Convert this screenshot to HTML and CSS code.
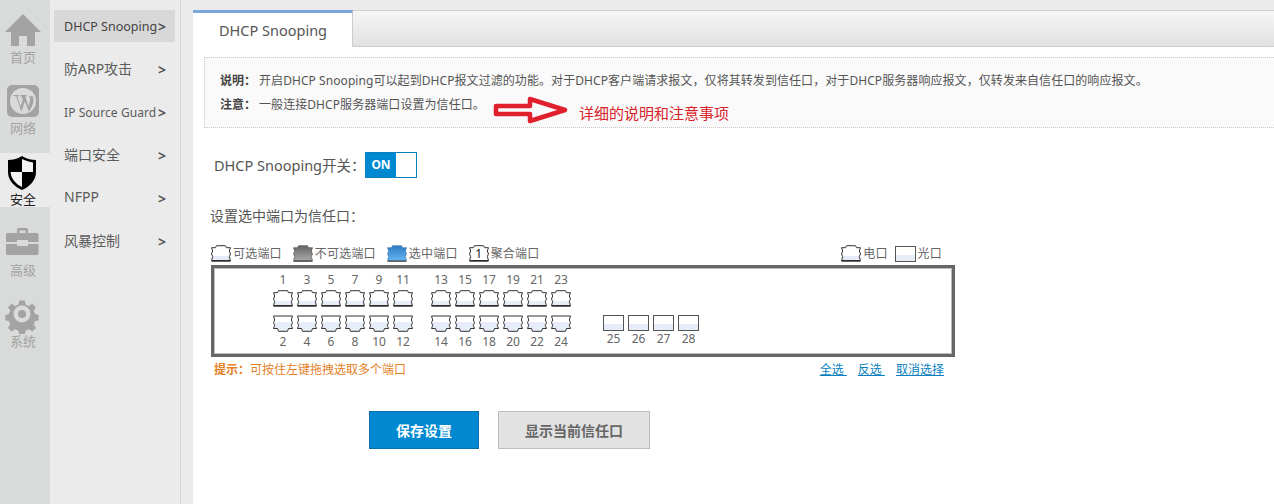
FILE: index.html
```html
<!DOCTYPE html>
<html lang="zh-CN">
<head>
<meta charset="utf-8">
<title>DHCP Snooping</title>
<link rel="stylesheet" href="styles.css">
</head>
<body>
<svg class="defs" width="0" height="0">
  <defs>
    <linearGradient id="gb" x1="0" y1="0" x2="0" y2="1"><stop offset="0" stop-color="#2c7cc4"/><stop offset="1" stop-color="#66b4f0"/></linearGradient>
    <linearGradient id="gg" x1="0" y1="0" x2="0" y2="1"><stop offset="0" stop-color="#666"/><stop offset="1" stop-color="#a8a8a8"/></linearGradient>
  </defs>
  <symbol id="rj" viewBox="0 0 20 17">
    <path class="rj-fill" d="M1.500 11h17l.7 4.500H.8z"/>
    <path class="rj-line" d="M5.500.7h9l1 2h4l-1.200 3.300 1.200 3-1.200 2.500 1.200 4H.5l1.200-4L.5 9l1.200-3L.5 2.700h4z"/>
    <path class="rj-base" d="M.5 16.200h19"/>
  </symbol>
  <symbol id="rjw" viewBox="0 0 20 17">
    <path class="rj-line" d="M5.500.7h9l1 2h4l-1.200 3.300 1.200 3-1.200 2.500 1.200 4H.5l1.200-4L.5 9l1.200-3L.5 2.700h4z"/>
    <path class="rj-base" d="M.5 16.200h19"/>
  </symbol>
  <symbol id="rjd" viewBox="0 0 20 17">
    <path class="rj-fill" d="M2 7h16l.7 2-1 2.500.7 2h-3l-1 2.500h-9l-1-2.500h-3l.7-2-1-2.500z"/>
    <path class="rj-line" d="M.5 1h19l-1.200 4 1.200 2.500-1.200 3 1.200 3h-4l-1 2.800h-9l-1-2.800h-4l1.200-3-1.200-3L1.700 5z"/>
  </symbol>
  <symbol id="rjb" viewBox="0 0 20 17">
    <path fill="url(#gb)" stroke="#2a6ea8" stroke-width=".6" d="M5.500.7h9l1 2h4l-1.200 3.300 1.200 3-1.200 2.500 1.200 4H.5l1.200-4L.5 9l1.200-3L.5 2.700h4z"/>
    <path class="rj-base" d="M.5 16.200h19"/>
  </symbol>
  <symbol id="rjg" viewBox="0 0 20 17">
    <path fill="url(#gg)" stroke="#444" stroke-width=".6" d="M5.500.7h9l1 2h4l-1.200 3.300 1.200 3-1.200 2.500 1.200 4H.5l1.200-4L.5 9l1.200-3L.5 2.700h4z"/>
    <path class="rj-base" d="M.5 16.200h19"/>
  </symbol>
  <symbol id="fb" viewBox="0 0 21 16">
    <rect class="rj-fill" x="1" y="9" width="19" height="6"/>
    <rect class="fb-box" x=".5" y=".5" width="20" height="15"/>
  </symbol>
</svg>

<div class="app">
  <nav class="rail">
    <a class="rail-item">
      <svg class="rail-icon" viewBox="0 0 50 36"><path class="ic" d="M23 0 41 18H35V32H27V22H19V32H11V18H5Z"/></svg>
      <span>首页</span>
    </a>
    <a class="rail-item">
      <svg class="rail-icon" viewBox="0 0 50 36">
        <rect class="ic" x="7" y="0" width="32" height="32" rx="5"/>
        <circle class="ic-light" cx="23" cy="16" r="13"/>
        <path class="ic" d="M12.500 10h6.500v1.300h-1.700l3.200 10 2.300-6.500-1.200-3.500h-1.300V10h6.500v1.300h-1.600l3.200 10 1.600-5.200c.7-2.300-.3-3.300-1.100-4.800h3.800c1.700 4.800.5 9-3.800 15.500l-4-10.200-3.500 10.200-5.300-15.500h-1.600z"/>
      </svg>
      <span>网络</span>
    </a>
    <a class="rail-item rail-active">
      <svg class="rail-icon" viewBox="0 0 50 36">
        <path class="sh-black" d="M22 0C27 3 32 4 36 4V16C36 25 29 31 22 34 15 31 8 25 8 16V4C12 4 17 3 22 0Z"/>
        <path class="sh-white" d="M22 3C26 5 30 6 33 6.500V16H22ZM22 16V31C16 28 11 23 10.600 16Z"/>
      </svg>
      <span>安全</span>
    </a>
    <a class="rail-item">
      <svg class="rail-icon" viewBox="0 0 50 36">
        <path class="ic" d="M17 2.500a1.500 1.500 0 0 1 1.500-1.500h8a1.500 1.500 0 0 1 1.500 1.500V6H25.500V3.500h-6V6H17Z"/>
        <path class="ic" d="M8 6H37a1.500 1.500 0 0 1 1.500 1.500V15H28V13H17V15H6V7.500A1.500 1.500 0 0 1 8 6Z"/>
        <path class="ic" d="M6 17H17V19H28V17H38.500V26.500A1.500 1.500 0 0 1 37 28H7.500A1.500 1.500 0 0 1 6 26.500Z"/>
      </svg>
      <span>高级</span>
    </a>
    <a class="rail-item">
      <svg class="rail-icon" viewBox="0 0 50 36">
        <path class="ic" d="M19 1h6l1 4.500 3.500 1.500 4-2.500 4 4-2.500 4 1.500 3.500 4 1v6l-4 1-1.500 3.500 2.500 4-4 4-4-2.500-3.500 1.500-1 4.500h-6l-1-4.500-3.500-1.500-4 2.500-4-4 2.500-4-1.500-3.500-4-1v-6l4-1 1.500-3.500-2.500-4 4-4 4 2.500 3.500-1.500z" transform="translate(2.200 1.600) scale(.9)"/>
        <circle class="ic-light" cx="22" cy="16" r="8.500"/>
        <circle class="ic" cx="22" cy="16" r="4"/>
      </svg>
      <span>系统</span>
    </a>
  </nav>

  <aside class="submenu">
    <a class="sub-item sub-active"><span class="sub-text sub-latin">DHCP Snooping</span><b class="sub-arrow">&gt;</b></a>
    <a class="sub-item"><span class="sub-text">防ARP攻击</span><b class="sub-arrow">&gt;</b></a>
    <a class="sub-item"><span class="sub-text sub-small">IP Source Guard</span><b class="sub-arrow">&gt;</b></a>
    <a class="sub-item"><span class="sub-text">端口安全</span><b class="sub-arrow">&gt;</b></a>
    <a class="sub-item"><span class="sub-text">NFPP</span><b class="sub-arrow">&gt;</b></a>
    <a class="sub-item"><span class="sub-text">风暴控制</span><b class="sub-arrow">&gt;</b></a>
  </aside>

  <main class="main">
    <div class="tabs"><div class="tab">DHCP Snooping</div></div>

    <section class="notice">
      <p class="notice-line"><b>说明：</b>开启DHCP Snooping可以起到DHCP报文过滤的功能。对于DHCP客户端请求报文，仅将其转发到信任口，对于DHCP服务器响应报文，仅转发来自信任口的响应报文。</p>
      <p class="notice-line"><b>注意：</b>一般连接DHCP服务器端口设置为信任口。</p>
      <div class="callout">
        <svg class="callout-arrow" width="76" height="28" viewBox="0 0 76 28"><path d="M3 10H37V3L72 14 37 25V18H3Z"/></svg>
        <span class="callout-text">详细的说明和注意事项</span>
      </div>
    </section>

    <div class="switch-row">
      <span class="switch-label">DHCP Snooping开关：</span>
      <div class="switch"><span class="switch-on">ON</span></div>
    </div>

    <h2 class="section-title">设置选中端口为信任口：</h2>

    <div class="legend">
      <div class="legend-group">
        <span class="legend-item"><svg class="lg-icon"><use href="#rj"/></svg>可选端口</span>
        <span class="legend-item"><svg class="lg-icon"><use href="#rjg"/></svg>不可选端口</span>
        <span class="legend-item"><svg class="lg-icon"><use href="#rjb"/></svg>选中端口</span>
        <span class="legend-item"><span class="lg-agg"><svg class="lg-agg-icon"><use href="#rjw"/></svg><b class="lg-agg-num">1</b></span>聚合端口</span>
      </div>
      <div class="legend-group legend-right">
        <span class="legend-item"><svg class="lg-icon"><use href="#rj"/></svg>电口</span>
        <span class="legend-item"><svg class="lg-fiber"><use href="#fb"/></svg>光口</span>
      </div>
    </div>

    <div class="board">
      <div class="board-inner">
        <div class="ports-col">
          <div class="port-row port-top">
            <div class="port"><span>1</span><svg class="rj"><use href="#rj"/></svg></div>
            <div class="port"><span>3</span><svg class="rj"><use href="#rj"/></svg></div>
            <div class="port"><span>5</span><svg class="rj"><use href="#rj"/></svg></div>
            <div class="port"><span>7</span><svg class="rj"><use href="#rj"/></svg></div>
            <div class="port"><span>9</span><svg class="rj"><use href="#rj"/></svg></div>
            <div class="port"><span>11</span><svg class="rj"><use href="#rj"/></svg></div>
            <div class="port port-gap"><span>13</span><svg class="rj"><use href="#rj"/></svg></div>
            <div class="port"><span>15</span><svg class="rj"><use href="#rj"/></svg></div>
            <div class="port"><span>17</span><svg class="rj"><use href="#rj"/></svg></div>
            <div class="port"><span>19</span><svg class="rj"><use href="#rj"/></svg></div>
            <div class="port"><span>21</span><svg class="rj"><use href="#rj"/></svg></div>
            <div class="port"><span>23</span><svg class="rj"><use href="#rj"/></svg></div>
          </div>
          <div class="port-row port-bottom">
            <div class="port"><svg class="rj"><use href="#rjd"/></svg><span>2</span></div>
            <div class="port"><svg class="rj"><use href="#rjd"/></svg><span>4</span></div>
            <div class="port"><svg class="rj"><use href="#rjd"/></svg><span>6</span></div>
            <div class="port"><svg class="rj"><use href="#rjd"/></svg><span>8</span></div>
            <div class="port"><svg class="rj"><use href="#rjd"/></svg><span>10</span></div>
            <div class="port"><svg class="rj"><use href="#rjd"/></svg><span>12</span></div>
            <div class="port port-gap"><svg class="rj"><use href="#rjd"/></svg><span>14</span></div>
            <div class="port"><svg class="rj"><use href="#rjd"/></svg><span>16</span></div>
            <div class="port"><svg class="rj"><use href="#rjd"/></svg><span>18</span></div>
            <div class="port"><svg class="rj"><use href="#rjd"/></svg><span>20</span></div>
            <div class="port"><svg class="rj"><use href="#rjd"/></svg><span>22</span></div>
            <div class="port"><svg class="rj"><use href="#rjd"/></svg><span>24</span></div>
          </div>
        </div>
        <div class="fiber-col">
          <div class="fiber"><svg class="fb"><use href="#fb"/></svg><span>25</span></div>
          <div class="fiber"><svg class="fb"><use href="#fb"/></svg><span>26</span></div>
          <div class="fiber"><svg class="fb"><use href="#fb"/></svg><span>27</span></div>
          <div class="fiber"><svg class="fb"><use href="#fb"/></svg><span>28</span></div>
        </div>
      </div>
    </div>

    <div class="hint-row">
      <span class="hint"><b>提示：</b>可按住左键拖拽选取多个端口</span>
      <span class="links"><a>全选&nbsp;</a><a>反选&nbsp;</a><a>取消选择</a></span>
    </div>

    <div class="actions">
      <button class="btn btn-primary">保存设置</button>
      <button class="btn btn-gray">显示当前信任口</button>
    </div>
  </main>
</div>
</body>
</html>
```
FILE: styles.css
```css
* { box-sizing: border-box; }
html, body { margin: 0; height: 100%; overflow: hidden; }
body { font-family: "Noto Sans", "Noto Sans CJK SC", sans-serif; color: #555; background: #ebebeb; }
.defs { position: absolute; }
.app { display: flex; height: 504px; }

/* icon rail */
.rail { width: 50px; flex: none; background: #d9dbda; padding-top: 11px; display: flex; flex-direction: column; gap: 17px; }
.rail-item { height: 54px; padding-top: 3px; display: flex; flex-direction: column; align-items: center; color: #a3a3a3; font-size: 13px; line-height: 18px; }
.rail-item span { margin-top: -2px; margin-left: -4px; }
.rail-icon { width: 50px; height: 36px; flex: none; display: block; }
.rail-active { background: #ebebeb; color: #222; }
.ic { fill: #a3a3a3; }
.ic-light { fill: #d9dbda; }
.sh-black { fill: #000; }
.sh-white { fill: #f4f4f4; }

/* sub menu */
.submenu { width: 131px; flex: none; background: #ebebeb; border-right: 1px solid #d5d5d5; padding: 10px 5px 0 4px; display: flex; flex-direction: column; gap: 11px; }
.sub-item { height: 32px; padding-left: 10px; display: flex; align-items: center; color: #5c5c5c; font-size: 14px; }
.sub-active { background: #d8d8d8; color: #444; }
.sub-text { width: 94px; white-space: nowrap; margin-bottom: 3px; }
.sub-latin { font-size: 12.500px; margin-bottom: 0; }
.sub-small { font-size: 12px; letter-spacing: .08px; margin-bottom: 0; }
.sub-arrow { font-size: 14px; color: #555; line-height: 1; margin-top: 2px; }

/* main */
.main { flex: 1; margin: 10px 0 0 12px; background: #fff; min-width: 0; }
.tabs { height: 37px; background: linear-gradient(#f6f6f6, #e1e1e1); border-top: 1px solid #d0d0d0; border-bottom: 1px solid #ccc; }
.tab { width: 160px; height: 37px; margin-top: -1px; padding-left: 26px; background: #fff; border-top: 3px solid #7ba6db; border-right: 1px solid #ccc; font-size: 14.500px; line-height: 35px; color: #555; }

.notice { position: relative; margin: 10px 0 0 11px; height: 71px; padding: 11px 0 0 15px; background: #fafafa; border: 1px dotted #c8c8c8; border-right: 0; font-size: 12px; line-height: 24px; color: #555; }
.notice-line { margin: 0; white-space: nowrap; letter-spacing: .07px; }
.notice-line b { display: inline-block; width: 39px; letter-spacing: 0; color: #444; }
.callout { position: absolute; left: 288px; top: 38px; display: flex; align-items: center; }
.callout-arrow { flex: none; }
.callout-arrow path { fill: #fafafa; stroke: #e0202c; stroke-width: 4.500; stroke-linejoin: round; }
.callout-text { margin: 6px 0 0 10px; font-size: 15px; line-height: 20px; color: #d8232a; white-space: nowrap; }

.switch-row { margin: 24px 0 0 21px; display: flex; align-items: center; height: 26px; }
.switch-label { font-size: 14.500px; color: #555; width: 151px; white-space: nowrap; margin-bottom: 2px; }
.switch { width: 52px; height: 26px; border: 1px solid #0a7fbf; background: #fff; }
.switch-on { display: block; width: 30px; height: 24px; background: #0088d0; color: #fff; font-size: 12px; font-weight: 700; line-height: 23px; text-align: center; }

.section-title { margin: 28px 0 0 17px; font-size: 14px; font-weight: 400; line-height: 20px; color: #555; }

.legend { margin: 17px 0 0 18px; width: 731px; height: 21px; display: flex; justify-content: space-between; font-size: 12px; color: #666; letter-spacing: .2px; }
.legend-group { display: flex; gap: 11px; }
.legend-right { gap: 7px; }
.legend-item { display: flex; align-items: center; white-space: nowrap; line-height: 18px; }
.lg-icon { width: 20px; height: 17px; margin-right: 2px; flex: none; }
.lg-fiber { width: 21px; height: 16px; margin-right: 2px; flex: none; }
.lg-agg { position: relative; width: 20px; height: 17px; margin-right: 2px; flex: none; }
.lg-agg-icon { width: 20px; height: 17px; display: block; }
.lg-agg-num { position: absolute; left: 0; right: 0; top: 0; text-align: center; line-height: 17px; color: #222; letter-spacing: 0; font-weight: 400; }

.rj-fill { fill: #e6ecf8; }
.rj-line { fill: none; stroke: #333; stroke-width: 1; }
.rj-base { fill: none; stroke: #222; stroke-width: 1; }
.fb-box { fill: none; stroke: #555; stroke-width: 1; }

.board { margin: 1px 0 0 18px; width: 744px; height: 92px; border: 3px solid #666; background: #fff; }
.board-inner { height: 86px; border: 1px solid #bbb; padding: 4px 0 0 56px; display: flex; align-items: flex-start; }
.ports-col { display: flex; flex-direction: column; gap: 8px; }
.port-row { display: flex; }
.port { width: 24px; display: flex; flex-direction: column; align-items: center; font-size: 12px; line-height: 16px; color: #666; }
.port-top span { height: 18px; margin-top: -1px; }
.port-bottom span { height: 17px; margin-top: 2px; }
.port-gap { margin-left: 14px; }
.rj { width: 20px; height: 17px; display: block; flex: none; }
.fiber-col { display: flex; margin: 42px 0 0 30px; gap: 4px; }
.fiber { width: 21px; display: flex; flex-direction: column; align-items: center; font-size: 12px; line-height: 16px; color: #666; }
.fb { width: 21px; height: 16px; display: block; }

.hint-row { margin: 4px 0 0 21px; width: 730px; height: 18px; display: flex; justify-content: space-between; align-items: center; font-size: 12px; line-height: 18px; }
.hint { color: #e4801f; }
.links { display: flex; gap: 11px; }
.links a { color: #0a7fbf; text-decoration: underline; }

.actions { margin: 32px 0 0 176px; display: flex; gap: 19px; }
.btn { height: 38px; font-family: inherit; font-size: 14px; font-weight: 700; padding: 0; }
.btn-primary { width: 110px; background: #0088d0; border: 1px solid #0a6fa8; color: #fff; }
.btn-gray { width: 152px; background: #e2e2e2; border: 1px solid #bdbdbd; color: #666; }
```
